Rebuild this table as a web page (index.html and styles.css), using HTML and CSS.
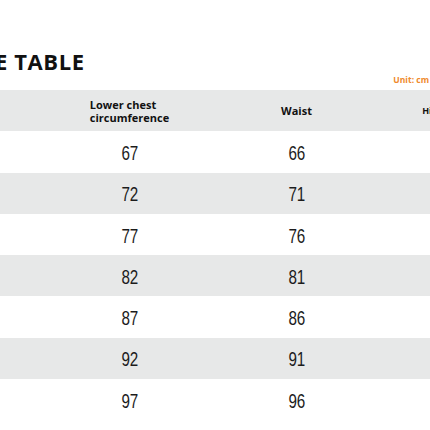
FILE: index.html
```html
<!DOCTYPE html>
<html lang="en">
<head>
    <meta charset="UTF-8">
    <meta name="viewport" content="width=device-width, initial-scale=1.0">
    <title>Size Table</title>
    <link rel="stylesheet" href="styles.css">
</head>
<body>
    <div class="sheet">
        <div class="sheet-head">
            <h1 class="title">SIZE TABLE</h1>
            <span class="unit">Unit: cm</span>
        </div>
        <div class="size-table">
            <div class="row header">
                <div class="cell">Size</div>
                <div class="cell"><span class="label">Lower chest<br>circumference</span></div>
                <div class="cell">Waist</div>
                <div class="cell small"><span class="label">Hip circumference</span></div>
            </div>
            <div class="row"><div class="cell"><span class="num">XS</span></div><div class="cell"><span class="num">67</span></div><div class="cell"><span class="num">66</span></div><div class="cell"><span class="num">82</span></div></div>
            <div class="row"><div class="cell"><span class="num">S</span></div><div class="cell"><span class="num">72</span></div><div class="cell"><span class="num">71</span></div><div class="cell"><span class="num">87</span></div></div>
            <div class="row"><div class="cell"><span class="num">M</span></div><div class="cell"><span class="num">77</span></div><div class="cell"><span class="num">76</span></div><div class="cell"><span class="num">92</span></div></div>
            <div class="row"><div class="cell"><span class="num">L</span></div><div class="cell"><span class="num">82</span></div><div class="cell"><span class="num">81</span></div><div class="cell"><span class="num">97</span></div></div>
            <div class="row"><div class="cell"><span class="num">XL</span></div><div class="cell"><span class="num">87</span></div><div class="cell"><span class="num">86</span></div><div class="cell"><span class="num">102</span></div></div>
            <div class="row"><div class="cell"><span class="num">2XL</span></div><div class="cell"><span class="num">92</span></div><div class="cell"><span class="num">91</span></div><div class="cell"><span class="num">107</span></div></div>
            <div class="row"><div class="cell"><span class="num">3XL</span></div><div class="cell"><span class="num">97</span></div><div class="cell"><span class="num">96</span></div><div class="cell"><span class="num">112</span></div></div>
        </div>
    </div>
</body>
</html>
```

FILE: styles.css
```css
* {
    box-sizing: border-box;
}

html, body {
    margin: 0;
    background-color: #ffffff;
    overflow: hidden;
}

.sheet {
    width: 668px;
    margin-left: -121px;
    padding-top: 46px;
}

.sheet-head {
    display: flex;
    justify-content: space-between;
    align-items: flex-start;
    height: 44px;
    padding-left: 82px;
    padding-right: 118px;
}

.title {
    margin: 0;
    font-family: "Open Sans", sans-serif;
    font-weight: 700;
    font-size: 22px;
    line-height: 30px;
    letter-spacing: 0.6px;
    color: #111111;
}

.unit {
    margin-top: 28px;
    font-family: "Open Sans", sans-serif;
    font-weight: 700;
    font-size: 8.5px;
    color: #ef8a2c;
}

.size-table {
    display: flex;
    flex-direction: column;
}

.row {
    display: grid;
    grid-template-columns: repeat(4, 167px);
    height: 41.3px;
    align-items: center;
}

.row:nth-child(odd) {
    background-color: #e7e8e8;
}

.cell {
    text-align: center;
    font-family: "Liberation Sans", sans-serif;
    font-size: 19.5px;
    color: #1c1c1c;
}

.num {
    display: inline-block;
    padding-top: 3px;
    transform: scaleX(0.78);
}

.header .cell {
    font-family: "Open Sans", sans-serif;
    font-weight: 700;
    font-size: 11px;
    line-height: 13px;
    color: #111111;
}

.label {
    display: inline-block;
    text-align: left;
}

.header .small {
    font-size: 9px;
}
```
